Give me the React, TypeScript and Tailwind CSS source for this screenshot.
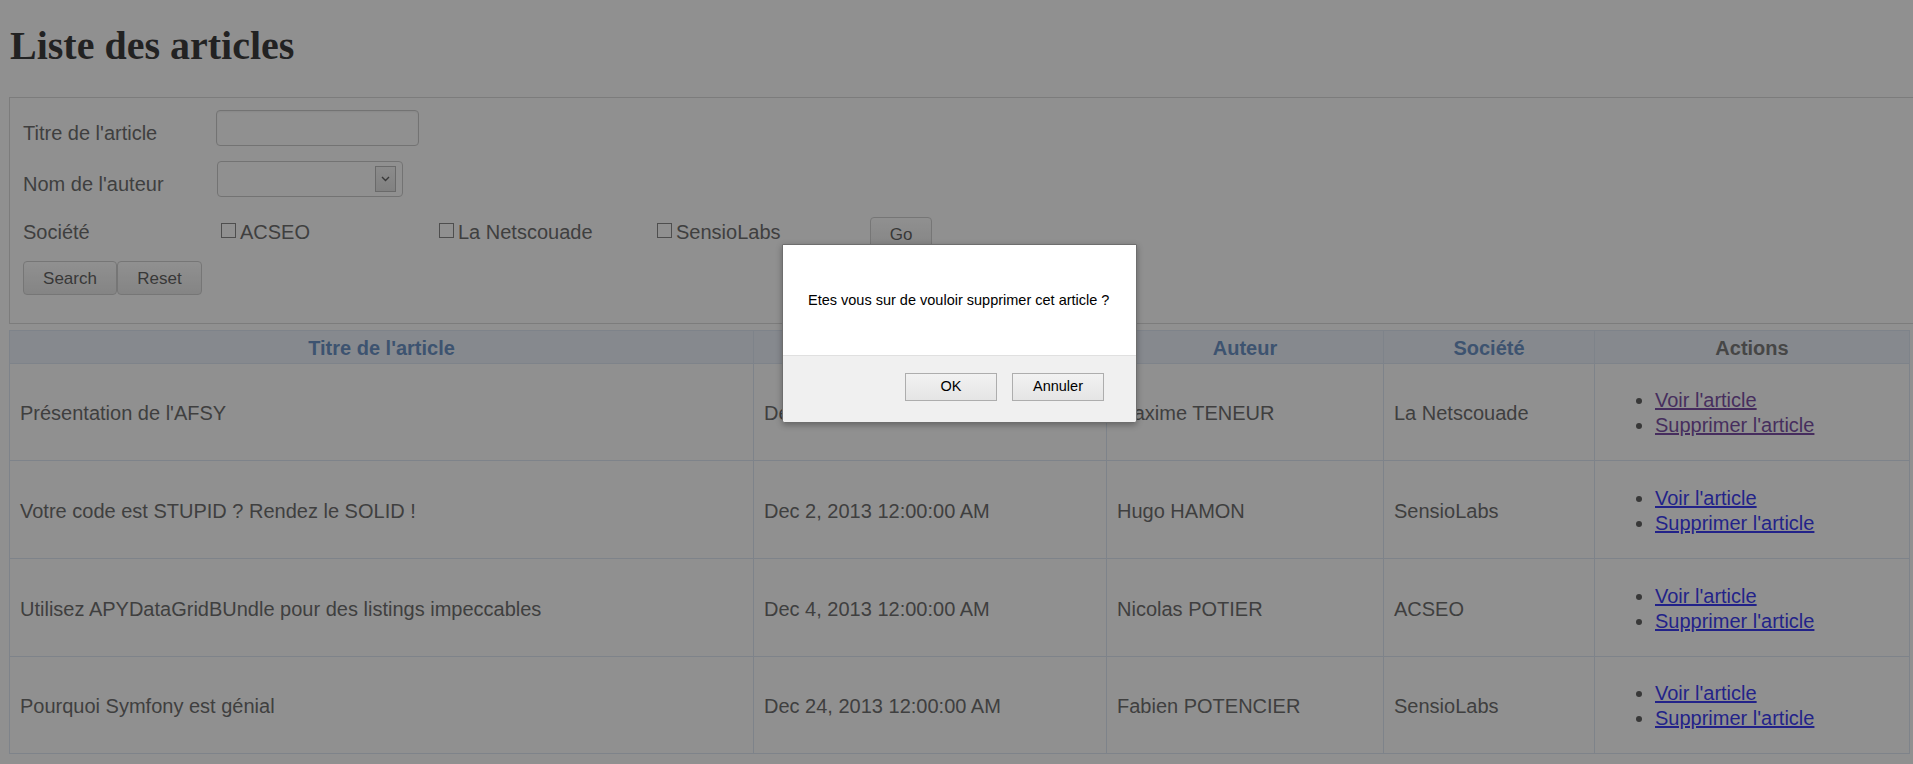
import React from "react";

type Article = {
  title: string;
  date: string;
  author: string;
  company: string;
  visited?: boolean;
  height: string;
};

const articles: Article[] = [
  { title: "Présentation de l'AFSY", date: "Dec 1, 2013 12:00:00 AM", author: "Maxime TENEUR", company: "La Netscouade", visited: true, height: "h-[97px]" },
  { title: "Votre code est STUPID ? Rendez le SOLID !", date: "Dec 2, 2013 12:00:00 AM", author: "Hugo HAMON", company: "SensioLabs", height: "h-[98px]" },
  { title: "Utilisez APYDataGridBUndle pour des listings impeccables", date: "Dec 4, 2013 12:00:00 AM", author: "Nicolas POTIER", company: "ACSEO", height: "h-[98px]" },
  { title: "Pourquoi Symfony est génial", date: "Dec 24, 2013 12:00:00 AM", author: "Fabien POTENCIER", company: "SensioLabs", height: "h-[97px]" },
];

const companies = ["ACSEO", "La Netscouade", "SensioLabs"];

function GrayButton({ label, className }: { label: string; className: string }) {
  return (
    <button
      type="button"
      className={`h-[34px] rounded-[4px] border border-[#c4c4c4] bg-gradient-to-b from-white to-[#e4e4e4] pt-[2px] text-[17px] text-[#333] ${className}`}
    >
      {label}
    </button>
  );
}

export default function App() {
  return (
    <div className="relative h-screen overflow-hidden bg-white font-['Liberation_Sans',Arial,sans-serif] text-[20px] text-[#444]">
      <div className="pl-[9px] pt-[23px]">
        {/* Titre */}
        <h1 className="pl-[1px] font-['Liberation_Serif','Times_New_Roman',serif] text-[40px] leading-[46px] font-bold text-black">
          Liste des articles
        </h1>

        {/* Filtres */}
        <form className="mt-[28px] w-[1920px] border border-[#d0d0d0] pl-[13px] pt-[12px] pb-[28px]">
          <div className="flex h-[36px] items-start">
            <label className="mt-[12px] w-[193px] leading-[23px]">Titre de l'article</label>
            <input
              type="text"
              className="h-[36px] w-[203px] rounded-[4px] border border-[#bdbdbd] bg-white shadow-[inset_0_1px_2px_rgba(0,0,0,0.08)] outline-none"
            />
          </div>

          <div className="mt-[15px] flex h-[36px] items-start">
            <label className="mt-[12px] w-[194px] leading-[23px]">Nom de l'auteur</label>
            <div className="flex h-[36px] w-[186px] items-center justify-end rounded-[4px] border border-[#bdbdbd] bg-white pr-[6px]">
              <span className="flex h-[26px] w-[21px] items-center justify-center border border-[#a8a8a8] bg-gradient-to-b from-[#f4f4f4] to-[#dcdcdc]">
                <svg width="9" height="6" viewBox="0 0 9 6">
                  <path d="M1 1l3.5 3.5L8 1" fill="none" stroke="#333" strokeWidth="1.4" />
                </svg>
              </span>
            </div>
          </div>

          <div className="mt-[20px] flex h-[34px] items-start">
            <span className="mt-[4px] w-[193px] leading-[23px]">Société</span>
            {companies.map((c) => (
              <label key={c} className="flex w-[218px] items-start">
                <span className="mt-[6px] ml-[5px] mr-[4px] h-[15px] w-[15px] border border-[#666] bg-white" />
                <span className="mt-[4px] leading-[23px]">{c}</span>
              </label>
            ))}
            <GrayButton label="Go" className="w-[62px]" />
          </div>

          <div className="mt-[10px] flex h-[34px]">
            <GrayButton label="Search" className="w-[94px]" />
            <GrayButton label="Reset" className="w-[85px]" />
          </div>
        </form>

        {/* Grille */}
        <table className="mt-[6px] w-[1900px] table-fixed border-collapse border border-[#d5e0f0]">
          <colgroup>
            <col className="w-[744px]" />
            <col className="w-[353px]" />
            <col className="w-[277px]" />
            <col className="w-[211px]" />
            <col className="w-[315px]" />
          </colgroup>
          <thead>
            <tr className="h-[33px] bg-[#e8effa] text-[20px] font-bold">
              <th className="border border-[#d5e0f0] pt-[2px] text-[#4073b5]">Titre de l'article</th>
              <th className="border border-[#d5e0f0] pt-[2px] text-[#4073b5]">Date de publication</th>
              <th className="border border-[#d5e0f0] pt-[2px] text-[#4073b5]">Auteur</th>
              <th className="border border-[#d5e0f0] pt-[2px] text-[#4073b5]">Société</th>
              <th className="border border-[#d5e0f0] pt-[2px] text-[#555]">Actions</th>
            </tr>
          </thead>
          <tbody>
            {articles.map((a) => (
              <tr key={a.title} className={a.height}>
                <td className="border border-[#d5e0f0] px-[10px] pt-[2px]">{a.title}</td>
                <td className="border border-[#d5e0f0] px-[10px] pt-[2px]">{a.date}</td>
                <td className="border border-[#d5e0f0] px-[10px] pt-[2px]">{a.author}</td>
                <td className="border border-[#d5e0f0] px-[10px] pt-[2px]">{a.company}</td>
                <td className="border border-[#d5e0f0] px-[10px] pt-[2px]">
                  <ul className="list-disc pl-[50px] leading-[25px] text-[#333]">
                    <li>
                      <a href="#" className={`underline ${a.visited ? "text-[#551a8b]" : "text-[#0000ee]"}`}>
                        Voir l'article
                      </a>
                    </li>
                    <li>
                      <a href="#" className={`underline ${a.visited ? "text-[#551a8b]" : "text-[#0000ee]"}`}>
                        Supprimer l'article
                      </a>
                    </li>
                  </ul>
                </td>
              </tr>
            ))}
          </tbody>
        </table>
      </div>

      {/* Voile */}
      <div className="absolute inset-0 bg-[#3b3b3b]/57" />

      {/* Boîte de confirmation */}
      <div className="absolute left-[782px] top-[244px] w-[355px] overflow-hidden rounded-b-[3px] border border-[#6e6e6e] bg-white text-[14.5px] text-black shadow-[0_2px_6px_rgba(0,0,0,0.3)]">
        <div className="h-[110px] pl-[25px] pt-[47px] leading-[17px]">
          Etes vous sur de vouloir supprimer cet article ?
        </div>
        <div className="flex h-[67px] items-start justify-end gap-[15px] border-t border-[#e0e0e0] bg-[#f0f0f0] pr-[32px] pt-[17px]">
          <button type="button" className="h-[28px] w-[92px] border border-[#adadad] bg-gradient-to-b from-[#f2f2f2] to-[#e5e5e5]">
            OK
          </button>
          <button type="button" className="h-[28px] w-[92px] border border-[#adadad] bg-gradient-to-b from-[#f2f2f2] to-[#e5e5e5]">
            Annuler
          </button>
        </div>
      </div>
    </div>
  );
}
